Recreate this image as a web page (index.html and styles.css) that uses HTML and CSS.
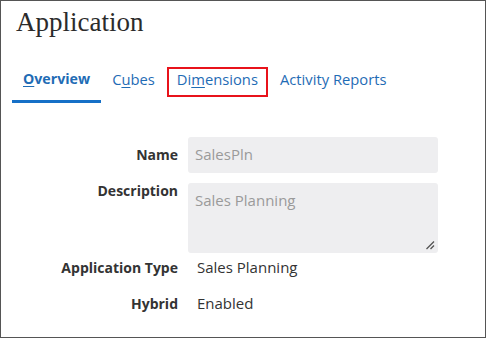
FILE: index.html
```html
<!DOCTYPE html>
<html lang="en">
<head>
<meta charset="utf-8">
<title>Application</title>
<link rel="stylesheet" href="styles.css">
</head>
<body>
<div class="frame">
  <h1 class="title">Application</h1>
  <nav class="tabs">
    <a class="tab active"><span class="key">O</span>verview</a>
    <a class="tab">C<span class="key">u</span>bes</a>
    <a class="tab focused">Di<span class="key">m</span>ensions</a>
    <a class="tab">Activity Reports</a>
  </nav>
  <div class="form">
    <div class="row row-name">
      <div class="label">Name</div>
      <div class="input">SalesPln</div>
    </div>
    <div class="row row-desc">
      <div class="label label-top">Description</div>
      <div class="input textarea">Sales Planning
        <svg class="grip" width="10" height="10" viewBox="0 0 10 10"><path d="M1.5 9 L9 1.5 M5.5 9 L9 5.5" stroke="#555" stroke-width="1.3" fill="none"/></svg>
      </div>
    </div>
    <div class="row row-type">
      <div class="label">Application Type</div>
      <div class="value">Sales Planning</div>
    </div>
    <div class="row row-hybrid">
      <div class="label">Hybrid</div>
      <div class="value">Enabled</div>
    </div>
  </div>
</div>
</body>
</html>
```
FILE: styles.css
```css
html, body {
  margin: 0;
  padding: 0;
  background: #fff;
}
.frame {
  width: 486px;
  height: 338px;
  box-sizing: border-box;
  border: 1px solid #555;
  font-family: "Open Sans", "Noto Sans", sans-serif;
  color: #333;
}
.title {
  margin: 5px 0 0 15px;
  font-family: "Liberation Serif", "Times New Roman", serif;
  font-weight: 400;
  font-size: 27px;
  line-height: 32px;
  color: #2b2b2b;
}
.tabs {
  display: flex;
  margin: 29px 0 0 11px;
}
.tab {
  position: relative;
  padding: 2px 11px 11px;
  line-height: 20px;
  font-size: 14.75px;
  color: #1f6cb5;
  border-bottom: 3px solid transparent;
  cursor: pointer;
}
.tab.active {
  font-weight: 700;
  border-bottom-color: #1670c7;
  font-size: 14.2px;
}
.key {
  text-decoration: underline;
  text-underline-offset: 2px;
}
.tab.focused::after {
  content: "";
  position: absolute;
  left: 1px;
  right: 1px;
  top: 0;
  bottom: 3px;
  border: 2px solid #e8131b;
}
.form {
  margin-top: 34px;
}
.row {
  display: flex;
  column-gap: 10px;
}
.label {
  flex: none;
  width: 177px;
  text-align: right;
  font-weight: 700;
  font-size: 14px;
  line-height: 20px;
  color: #333;
}
.row-name {
  align-items: baseline;
}
.row-desc {
  margin-top: 10px;
  align-items: flex-start;
}
.label-top {
  line-height: 16px;
}
.input {
  position: relative;
  box-sizing: border-box;
  width: 250px;
  height: 36px;
  padding: 7px 7px 0;
  background: #eeeef0;
  border-radius: 3px;
  font-size: 15px;
  line-height: 20px;
  color: #9a9a9a;
}
.textarea {
  height: 70px;
}
.grip {
  position: absolute;
  right: 3px;
  bottom: 3px;
}
.row-type {
  margin-top: 4px;
  align-items: baseline;
}
.row-hybrid {
  margin-top: 15px;
  align-items: baseline;
}
.value {
  padding-left: 9px;
  font-size: 15px;
  line-height: 20px;
  color: #333;
}
```
